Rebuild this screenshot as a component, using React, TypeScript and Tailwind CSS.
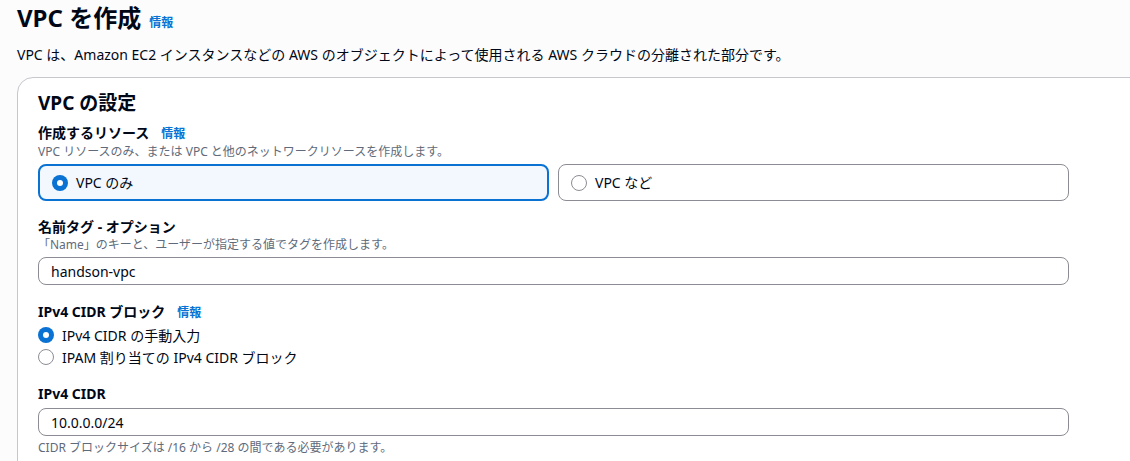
const font = { fontFamily: '"Noto Sans", "Noto Sans CJK JP", sans-serif' };

const Info = ({ className = 'ml-3' }: { className?: string }) => (
  <span className={`${className} text-[12px] font-bold text-[#0972d3]`}>情報</span>
);

const Radio = ({ checked }: { checked?: boolean }) =>
  checked ? (
    <span className="flex h-4 w-4 shrink-0 items-center justify-center rounded-full bg-[#0972d3]">
      <span className="h-1.5 w-1.5 rounded-full bg-white" />
    </span>
  ) : (
    <span className="h-4 w-4 shrink-0 rounded-full border border-[#8c8c94] bg-white" />
  );

const Label = ({ children, info }: { children: React.ReactNode; info?: boolean }) => (
  <div className="flex items-baseline text-[14px] font-bold leading-[20px] text-[#000716]">
    {children}
    {info && <Info />}
  </div>
);

const Hint = ({ children }: { children: React.ReactNode }) => (
  <div className="text-[12px] leading-[16px] text-[#5f6b7a]">{children}</div>
);

const Input = ({ value }: { value: string }) => (
  <div className="flex h-[28px] w-[1031px] items-center rounded-lg border border-[#8c8c94] bg-white px-3 text-[14px] text-[#000716]">
    {value}
  </div>
);

export default function App() {
  return (
    <div className="h-[461px] w-[1130px] overflow-hidden bg-[#fcfcfc] pl-[17px] text-[#000716]" style={font}>
      <div className="flex items-baseline pt-[2px]">
        <h1 className="text-[24px] font-bold leading-[32px]">VPC を作成</h1>
        <Info className="ml-2" />
      </div>
      <p className="mt-[11px] text-[14px] leading-[20px]">
        VPC は、Amazon EC2 インスタンスなどの AWS のオブジェクトによって使用される AWS クラウドの分離された部分です。
      </p>
      <div className="mt-[12px] w-[1200px] rounded-tl-2xl border border-[#c6c6cd] bg-white pl-[20px] pt-[12px]">
        <h2 className="text-[19px] font-bold leading-[26px]">VPC の設定</h2>

        <div className="mt-[7px]">
          <Label info>作成するリソース</Label>
          <Hint>VPC リソースのみ、または VPC と他のネットワークリソースを作成します。</Hint>
          <div className="mt-[4px] flex gap-[9px]">
            <div className="flex h-[37px] w-[511px] items-center gap-[8px] rounded-lg border-2 border-[#0972d3] bg-[#f2f8fd] pl-[12px] text-[14px]">
              <Radio checked />
              VPC のみ
            </div>
            <div className="flex h-[37px] w-[511px] items-center gap-[8px] rounded-lg border border-[#8c8c94] bg-white pl-[12px] text-[14px]">
              <Radio />
              VPC など
            </div>
          </div>
        </div>

        <div className="mt-[16px]">
          <Label>名前タグ - オプション</Label>
          <Hint>「Name」のキーと、ユーザーが指定する値でタグを作成します。</Hint>
          <div className="mt-[4px]">
            <Input value="handson-vpc" />
          </div>
        </div>

        <div className="mt-[17px]">
          <Label info>IPv4 CIDR ブロック</Label>
          <div className="mt-[2px] flex flex-col gap-[2px] text-[14px]">
            <div className="flex h-[20px] items-center gap-[8px]">
              <Radio checked />
              IPv4 CIDR の手動入力
            </div>
            <div className="flex h-[20px] items-center gap-[8px]">
              <Radio />
              IPAM 割り当ての IPv4 CIDR ブロック
            </div>
          </div>
        </div>

        <div className="mt-[17px]">
          <Label>IPv4 CIDR</Label>
          <div className="mt-[4px]">
            <Input value="10.0.0.0/24" />
          </div>
          <div className="mt-[4px]">
            <Hint>CIDR ブロックサイズは /16 から /28 の間である必要があります。</Hint>
          </div>
        </div>
        <div className="h-10" />
      </div>
    </div>
  );
}
